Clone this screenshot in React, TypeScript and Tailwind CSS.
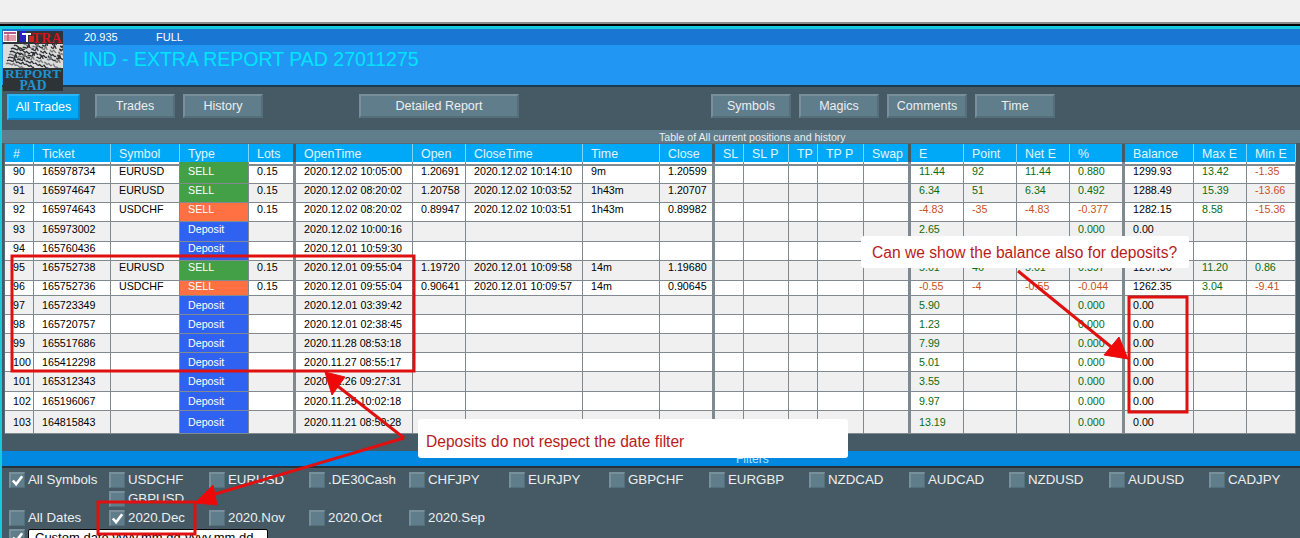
import React from 'react'

const grid = "grid grid-cols-[29px_77px_69px_69px_47px_117px_53px_117px_77px_55px_29px_45px_29px_46px_47px_53px_53px_53px_55px_69px_53px_49px]"

const headers = ['#', 'Ticket', 'Symbol', 'Type', 'Lots', 'OpenTime', 'Open', 'CloseTime', 'Time', 'Close', 'SL', 'SL P', 'TP', 'TP P', 'Swap', 'E', 'Point', 'Net E', '%', 'Balance', 'Max E', 'Min E']

// columns with the thick rule on their right side
const thick = [4, 9, 14, 18]

type Row = {
    h: string
    n: string
    ticket: string
    symbol?: string
    kind: 'buy' | 'sell' | 'dep'
    lots?: string
    open: string
    price?: string
    close?: string
    time?: string
    closePrice?: string
    e?: string
    point?: string
    net?: string
    pct?: string
    balance?: string
    max?: string
    min?: string
}

const rows: Row[] = [
    { h: 'h-[22px] [&>div]:pb-[3px]', n: '90', ticket: '165978734', symbol: 'EURUSD', kind: 'buy', lots: '0.15', open: '2020.12.02 10:05:00', price: '1.20691', close: '2020.12.02 10:14:10', time: '9m', closePrice: '1.20599', e: '11.44', point: '92', net: '11.44', pct: '0.880', balance: '1299.93', max: '13.42', min: '-1.35' },
    { h: 'h-[19px] [&>div]:pb-[5px]', n: '91', ticket: '165974647', symbol: 'EURUSD', kind: 'buy', lots: '0.15', open: '2020.12.02 08:20:02', price: '1.20758', close: '2020.12.02 10:03:52', time: '1h43m', closePrice: '1.20707', e: '6.34', point: '51', net: '6.34', pct: '0.492', balance: '1288.49', max: '15.39', min: '-13.66' },
    { h: 'h-[19px] [&>div]:pb-[5px]', n: '92', ticket: '165974643', symbol: 'USDCHF', kind: 'sell', lots: '0.15', open: '2020.12.02 08:20:02', price: '0.89947', close: '2020.12.02 10:03:51', time: '1h43m', closePrice: '0.89982', e: '-4.83', point: '-35', net: '-4.83', pct: '-0.377', balance: '1282.15', max: '8.58', min: '-15.36' },
    { h: 'h-[20px] [&>div]:pb-[4px]', n: '93', ticket: '165973002', kind: 'dep', open: '2020.12.02 10:00:16', e: '2.65', pct: '0.000', balance: '0.00' },
    { h: 'h-[19px] [&>div]:pb-[5px]', n: '94', ticket: '165760436', kind: 'dep', open: '2020.12.01 10:59:30', e: '1.11', pct: '0.000', balance: '0.00' },
    { h: 'h-[20px] [&>div]:pb-[6px]', n: '95', ticket: '165752738', symbol: 'EURUSD', kind: 'buy', lots: '0.15', open: '2020.12.01 09:55:04', price: '1.19720', close: '2020.12.01 10:09:58', time: '14m', closePrice: '1.19680', e: '5.01', point: '46', net: '5.01', pct: '0.397', balance: '1267.36', max: '11.20', min: '0.86' },
    { h: 'h-[15px] [&>div]:pb-[3px]', n: '96', ticket: '165752736', symbol: 'USDCHF', kind: 'sell', lots: '0.15', open: '2020.12.01 09:55:04', price: '0.90641', close: '2020.12.01 10:09:57', time: '14m', closePrice: '0.90645', e: '-0.55', point: '-4', net: '-0.55', pct: '-0.044', balance: '1262.35', max: '3.04', min: '-9.41' },
    { h: 'h-[19px]', n: '97', ticket: '165723349', kind: 'dep', open: '2020.12.01 03:39:42', e: '5.90', pct: '0.000', balance: '0.00' },
    { h: 'h-[19px]', n: '98', ticket: '165720757', kind: 'dep', open: '2020.12.01 02:38:45', e: '1.23', pct: '0.000', balance: '0.00' },
    { h: 'h-[19px]', n: '99', ticket: '165517686', kind: 'dep', open: '2020.11.28 08:53:18', e: '7.99', pct: '0.000', balance: '0.00' },
    { h: 'h-[19px]', n: '100', ticket: '165412298', kind: 'dep', open: '2020.11.27 08:55:17', e: '5.01', pct: '0.000', balance: '0.00' },
    { h: 'h-[20px]', n: '101', ticket: '165312343', kind: 'dep', open: '2020.11.26 09:27:31', e: '3.55', pct: '0.000', balance: '0.00' },
    { h: 'h-[19px]', n: '102', ticket: '165196067', kind: 'dep', open: '2020.11.25 10:02:18', e: '9.97', pct: '0.000', balance: '0.00' },
    { h: 'h-[23px]', n: '103', ticket: '164815843', kind: 'dep', open: '2020.11.21 08:50:28', e: '13.19', pct: '0.000', balance: '0.00' },
]

const Cell = ({ children, bar, className = '' }: { children?: React.ReactNode, bar?: boolean, className?: string }) => (
    <div className={`flex items-center pl-[8px] border-b border-[#808a90] overflow-hidden whitespace-nowrap ${bar ? 'border-r-[3px]' : 'border-r'} border-r-[#7f8a90] ${className}`}>
        {children}
    </div>
)

const money = (v?: string) => (v?.startsWith('-') ? 'text-[#c8501e]' : 'text-[#0b6b12]')

const TableRow = ({ row, index }: { row: Row, index: number }) => {
    const type = {
        buy: { label: 'SELL', cls: 'bg-[#43a047]' },
        sell: { label: 'SELL', cls: 'bg-[#ff7043]' },
        dep: { label: 'Deposit', cls: 'bg-[#2f62f0]' },
    }[row.kind]
    return (
        <div className={`${grid} ${row.h} ${index % 2 ? 'bg-[#f0f0f0]' : 'bg-white'} text-black`}>
            <Cell>{row.n}</Cell>
            <Cell>{row.ticket}</Cell>
            <Cell>{row.symbol}</Cell>
            <Cell className={`${type.cls} text-white`}>{type.label}</Cell>
            <Cell bar>{row.lots}</Cell>
            <Cell>{row.open}</Cell>
            <Cell>{row.price}</Cell>
            <Cell>{row.close}</Cell>
            <Cell>{row.time}</Cell>
            <Cell bar>{row.closePrice}</Cell>
            <Cell />
            <Cell />
            <Cell />
            <Cell />
            <Cell bar />
            <Cell className={money(row.e)}>{row.e}</Cell>
            <Cell className={money(row.point)}>{row.point}</Cell>
            <Cell className={money(row.net)}>{row.net}</Cell>
            <Cell bar className={money(row.pct)}>{row.pct}</Cell>
            <Cell>{row.balance}</Cell>
            <Cell className={money(row.max)}>{row.max}</Cell>
            <Cell className={money(row.min)}>{row.min}</Cell>
        </div>
    )
}

const Button = ({ label, active, className = '' }: { label: string, active?: boolean, className?: string }) => (
    <div className={`flex items-center justify-center border-2 pt-[1px] text-[12.5px] ${active ? 'w-[73px] h-[26px] bg-[#03a9f4] border-t-[#29b6f6] border-l-[#29b6f6] border-r-[#0288d1] border-b-[#0288d1] text-white' : 'h-[24px] bg-[#607d8b] border-t-[#78909c] border-l-[#78909c] border-r-[#546e7a] border-b-[#546e7a] text-[#eceff1]'} ${className}`}>
        {label}
    </div>
)

const Check = ({ label, checked, className = '' }: { label?: string, checked?: boolean, className?: string }) => (
    <div className={`flex items-center w-[100px] shrink-0 h-[16px] whitespace-nowrap text-[#eceff1] text-[13.3px] ${className}`}>
        <div className="relative w-[16px] h-[16px] mr-[3px] shrink-0 bg-[#607d8b] border-t-2 border-l-2 border-t-[#78909c] border-l-[#78909c] border-r border-b border-r-[#546e7a] border-b-[#546e7a]">
            {checked && (
                <svg viewBox="0 0 14 14" className="absolute left-0 top-0 w-[13px] h-[13px]">
                    <path d="M2 7 L5.5 11 L12 2.5" fill="none" stroke="white" strokeWidth="2.8" />
                </svg>
            )}
        </div>
        {label}
    </div>
)

const symbols = ['USDCHF', 'EURUSD', '.DE30Cash', 'CHFJPY', 'EURJPY', 'GBPCHF', 'EURGBP', 'NZDCAD', 'AUDCAD', 'NZDUSD', 'AUDUSD', 'CADJPY']

// curly bits for the noisy band of the logo, same every render
const noise = Array.from({ length: 46 }, (_, i) => {
    const x = (i * 17) % 60
    const y = (i * 7) % 23
    const a = (i * 5) % 7 - 3
    const b = (i * 3) % 5 - 2
    return `M${x} ${y}c${a} -3 ${a + 3} 3 ${a + 4} ${b}s2 3 ${b + 3} 1`
})

const Logo = () => (
    <div className="absolute left-[3px] top-[31px] w-[60px] h-[60px] bg-[#2e3336] overflow-hidden font-['Liberation_Serif',serif] font-bold text-center">
        <div className="h-[13px] pl-[29px] text-[14px] leading-[15px] text-[#d8141a] text-left whitespace-nowrap">TRA</div>
        <svg viewBox="0 0 60 24" className="w-[60px] h-[24px]">
            <rect width="60" height="24" fill="#dcdcdc" />
            {noise.map((d, i) => <path key={i} d={d} fill="none" stroke={i % 3 ? '#2b2f33' : '#777'} strokeWidth="1.3" />)}
        </svg>
        <div className="h-[12px] text-[13.5px] leading-[12px] text-[#1f93cf] whitespace-nowrap">REPORT</div>
        <div className="h-[11px] text-[13.6px] leading-[11px] text-[#1f93cf]">PAD</div>
        <svg viewBox="0 0 14 12" className="absolute left-0 top-0 w-[14px] h-[12px]">
            <rect x="0" y="0" width="14" height="11" fill="#fff" />
            <rect x="1" y="1" width="12" height="2" fill="#b85a8a" />
            <path d="M1 5h12M1 7h12M1 9h12M5 3v7" stroke="#c23b55" strokeWidth="1" />
        </svg>
        <svg viewBox="0 0 16 12" className="absolute left-[16px] top-0 w-[16px] h-[12px]">
            <path d="M1 0h6v11H1z" fill="#2323c8" />
            <path d="M3 2h9v2H9v7H7V4H3z" fill="#fff" />
            <path d="M10 5h5v6h-5z" fill="#d82020" />
        </svg>
    </div>
)

export default function App() {
    return (
        <div className="relative w-[1300px] h-[538px] overflow-hidden bg-[#f0f0f0] font-['Liberation_Sans',Arial,sans-serif]">
            <div className="h-[22px]" />
            <div className="h-[2px] bg-[#8a8a8a]" />
            <div className="h-[2px] bg-black" />
            <div className="h-[512px] border-t-[3px] border-l-2 border-[#18c8dc] bg-[#455a64] flex flex-col">
                {/* title bar */}
                <div className="h-[56px] shrink-0 flex flex-col">
                    <div className="h-[16px] bg-[#1976d2] text-white text-[11px] leading-[17px] pl-[82px] flex">
                        <span className="w-[72px]">20.935</span>
                        <span>FULL</span>
                    </div>
                    <div className="flex-1 bg-[#2196f3] text-[#00e5ff] text-[19.5px] pl-[81px] pt-[2px] leading-[24px]">
                        IND - EXTRA REPORT PAD 27011275
                    </div>
                </div>
                <div className="h-[2px] bg-[#1c3a50] shrink-0" />

                {/* toolbar */}
                <div className="h-[43px] shrink-0 flex items-start pt-[7px] pl-[5px] bg-[#455a64]">
                    <Button label="All Trades" active />
                    <Button label="Trades" className="w-[80px] ml-[15px]" />
                    <Button label="History" className="w-[80px] ml-[8px]" />
                    <Button label="Detailed Report" className="w-[160px] ml-[96px]" />
                    <Button label="Symbols" className="w-[80px] ml-[192px]" />
                    <Button label="Magics" className="w-[80px] ml-[8px]" />
                    <Button label="Comments" className="w-[80px] ml-[8px]" />
                    <Button label="Time" className="w-[80px] ml-[8px]" />
                </div>

                {/* table */}
                <div className="h-[13px] shrink-0 bg-[#607d8b] text-[#eceff1] text-[10.6px] leading-[15px] overflow-hidden pl-[657px] whitespace-nowrap">
                    Table of All current positions and history
                </div>
                <div className="ml-[2px] w-[1292px] shrink-0 border-t border-l border-[#5a6a72] text-[10.7px]">
                    <div className={`${grid} h-[18px] bg-[#00a9f7] text-[#e1f5fe] text-[12.4px]`}>
                        {headers.map((h, i) => (
                            <div key={h} className={`flex items-center pl-[8px] pt-[1px] border-b-[2px] border-b-[#7f8a90] ${thick.includes(i) ? 'border-r-[3px] border-r-[#455a64]' : 'border-r border-r-[#81d4fa]'}`}>
                                {h}
                            </div>
                        ))}
                    </div>
                    {rows.map((r, i) => <TableRow key={r.n} row={r} index={i} />)}
                </div>

                {/* filters */}
                <div className="mt-[17px] h-[15px] shrink-0 bg-[#0288e0] text-[#b3e5fc] text-[12px] leading-[16px] pl-[734px]">Filters</div>
                <div className="h-[2px] bg-[#263238] shrink-0" />
                <div className="pl-[7px] pt-[4px]">
                    <div className="flex">
                        <Check label="All Symbols" checked />
                        {symbols.map(s => <Check key={s} label={s} />)}
                    </div>
                    <div className="flex pl-[100px] mt-[3px]">
                        <Check label="GBPUSD" />
                    </div>
                    <div className="flex mt-[3px]">
                        <Check label="All Dates" />
                        <Check label="2020.Dec" checked />
                        <Check label="2020.Nov" />
                        <Check label="2020.Oct" />
                        <Check label="2020.Sep" />
                    </div>
                    <div className="flex mt-[3px]">
                        <Check checked className="!w-[19px]" />
                        <div className="w-[240px] h-[20px] bg-white border border-black rounded-t-[2px] text-black text-[13px] leading-[16px] pl-[6px] overflow-hidden whitespace-nowrap">
                            Custom date yyyy.mm.dd-yyyy.mm.dd
                        </div>
                    </div>
                </div>
            </div>

            <Logo />

            {/* review annotations on top of the screenshot */}
            <svg viewBox="0 0 1300 538" className="absolute left-0 top-0 w-[1300px] h-[538px] pointer-events-none">
                <g fill="none" stroke="#e01010" strokeWidth="3">
                    <rect x="12" y="256" width="402" height="115" />
                    <rect x="1129" y="297" width="58" height="115" />
                    <rect x="98" y="502" width="97" height="32" />
                </g>
                <g stroke="#e01010" strokeWidth="3" fill="#f00808">
                    <path d="M1018 271 L1115 350" />
                    <path d="M1128 359 L1104 355 L1119 337 Z" strokeWidth="1" />
                    <path d="M404 438 L335 384" />
                    <path d="M325 372 L345 377 L332 395 Z" strokeWidth="1" />
                    <path d="M404 438 L212 495" />
                    <path d="M195 503 L213 485 L217 505 Z" strokeWidth="1" />
                </g>
            </svg>
            <div className="absolute left-[861px] top-[236px] w-[328px] h-[32px] bg-white rounded-[3px] pl-[11px] text-[#b71c1c] text-[15.6px] leading-[33px] whitespace-nowrap">
                Can we show the balance also for deposits?
            </div>
            <div className="absolute left-[418px] top-[419px] w-[430px] h-[39px] bg-white rounded-[3px] pl-[8px] text-[#b71c1c] text-[15.6px] leading-[45px] whitespace-nowrap">
                Deposits do not respect the date filter
            </div>
        </div>
    )
}
